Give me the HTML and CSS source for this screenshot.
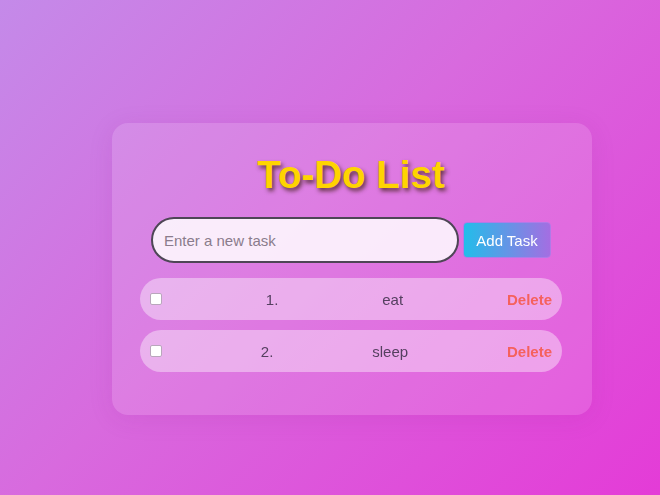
FILE: index.html
```html
<!DOCTYPE html>
<html lang="en">
<head>
<meta charset="utf-8">
<title>To-Do List</title>
<link rel="stylesheet" href="styles.css">
</head>
<body>
  <div class="card">
    <h1 class="title">To-Do List</h1>
    <div class="input-row">
      <input class="task-input" type="text" placeholder="Enter a new task" autofocus>
      <button class="add-btn">Add Task</button>
    </div>
    <ul class="list">
      <li class="item">
        <input class="check" type="checkbox">
        <span class="num">1.</span>
        <span class="text">eat</span>
        <span class="del">Delete</span>
      </li>
      <li class="item">
        <input class="check" type="checkbox">
        <span class="num">2.</span>
        <span class="text">sleep</span>
        <span class="del">Delete</span>
      </li>
    </ul>
  </div>
</body>
</html>
```

FILE: styles.css
```css
html, body {
  margin: 0;
  padding: 0;
  height: 100%;
}
body {
  background: linear-gradient(135deg, #c48ae9 0%, #d86ade 45%, #e43bd7 100%);
  font-family: "Liberation Sans", Arial, sans-serif;
  overflow: hidden;
}
.card {
  box-sizing: border-box;
  width: 480px;
  margin: 123px 0 0 112px;
  padding: 30px 30px 43px 28px;
  border-radius: 16px;
  background: rgba(255, 255, 255, 0.13);
  box-shadow: 0 4px 24px rgba(150, 40, 160, 0.12);
}
.title {
  margin: 0 0 20px;
  height: 44px;
  line-height: 44px;
  text-align: center;
  font-size: 38.5px;
  font-weight: bold;
  color: #ffd400;
  text-shadow: 2px 3px 4px rgba(70, 35, 30, 0.8);
}
.input-row {
  display: flex;
  align-items: center;
  gap: 4px;
  margin: 0 11px;
}
.task-input {
  box-sizing: border-box;
  width: 308px;
  height: 46px;
  border: 2px solid #4e4656;
  border-radius: 23px;
  padding: 0 11px;
  background: rgba(255, 255, 255, 0.85);
  font-family: "Liberation Sans", Arial, sans-serif;
  font-size: 15px;
  color: #333;
  outline: none;
}
.task-input::placeholder {
  color: #8a7c8c;
}
.add-btn {
  box-sizing: border-box;
  width: 88px;
  height: 36px;
  border: 1px solid #b07ae8;
  border-radius: 4px;
  background: linear-gradient(90deg, #22bdea, #a46ee2);
  color: #fff;
  font-family: "Liberation Sans", Arial, sans-serif;
  font-size: 15px;
  padding: 0;
}
.list {
  list-style: none;
  margin: 15px 0 0;
  padding: 0;
  display: flex;
  flex-direction: column;
  gap: 10px;
}
.item {
  box-sizing: border-box;
  width: 422px;
  height: 42px;
  border-radius: 21px;
  background: rgba(255, 255, 255, 0.4);
  display: flex;
  align-items: center;
  justify-content: space-between;
  padding: 0 10px 0 7px;
  font-size: 15px;
  color: #554060;
}
.check {
  appearance: none;
  -webkit-appearance: none;
  box-sizing: border-box;
  width: 12px;
  height: 12px;
  margin: 0 0 0 3px;
  border: 1px solid #b9a6bc;
  border-radius: 2px;
  background: #fff;
}
.del {
  color: #f5615d;
  font-weight: bold;
}
```
